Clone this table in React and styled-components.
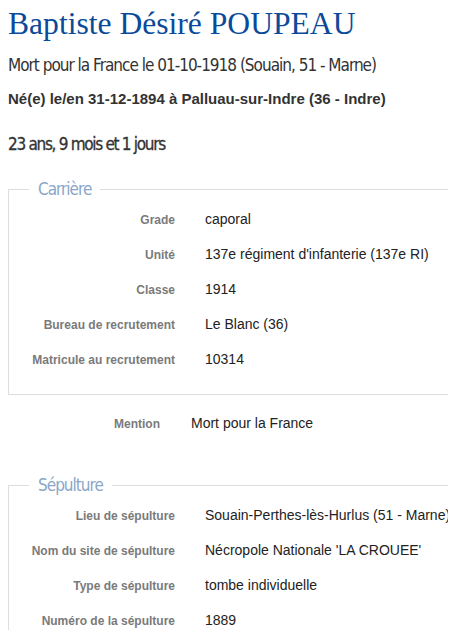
import React from "react";
import styled, { createGlobalStyle } from "styled-components";

const GlobalStyle = createGlobalStyle`
  body {
    margin: 8px;
    background: #fff;
    font-family: "Liberation Sans", Arial, sans-serif;
    color: #222;
    overflow: hidden;
  }
`;

const carriere = [
  ["Grade", "caporal"],
  ["Unité", "137e régiment d'infanterie (137e RI)"],
  ["Classe", "1914"],
  ["Bureau de recrutement", "Le Blanc (36)"],
  ["Matricule au recrutement", "10314"],
];

const sepulture = [
  ["Lieu de sépulture", "Souain-Perthes-lès-Hurlus (51 - Marne)"],
  ["Nom du site de sépulture", "Nécropole Nationale 'LA CROUEE'"],
  ["Type de sépulture", "tombe individuelle"],
  ["Numéro de la sépulture", "1889"],
];

function App() {
  return (
    <Page>
      <GlobalStyle />
      <Title>Baptiste Désiré POUPEAU</Title>
      <Subtitle>Mort pour la France le 01-10-1918 (Souain, 51 - Marne)</Subtitle>
      <Birth>Né(e) le/en 31-12-1894 à Palluau-sur-Indre (36 - Indre)</Birth>
      <Age>23 ans, 9 mois et 1 jours</Age>

      <Section>
        <Legend>Carrière</Legend>
        {carriere.map(([label, value]) => (
          <Row key={label}>
            <Label>{label}</Label>
            <Value>{value}</Value>
          </Row>
        ))}
      </Section>

      <Row $labelWidth={152} $gap={31} $outside>
        <Label>Mention</Label>
        <Value>Mort pour la France</Value>
      </Row>

      <Section $top={33}>
        <Legend>Sépulture</Legend>
        {sepulture.map(([label, value]) => (
          <Row key={label}>
            <Label>{label}</Label>
            <Value>{value}</Value>
          </Row>
        ))}
      </Section>
    </Page>
  );
}

export default App;

const Page = styled.div`
  width: 470px;
`;

const Title = styled.h1`
  margin: -2px 0 0;
  font-family: "Liberation Serif", "DejaVu Serif", serif;
  font-weight: 400;
  font-size: 31.6px;
  line-height: 36px;
  color: #0a4a9a;
  white-space: nowrap;
`;

const Subtitle = styled.h2`
  margin: 11px 0 0;
  font-family: "DejaVu Sans", sans-serif;
  font-stretch: condensed;
  font-weight: 400;
  font-size: 17px;
  line-height: 24px;
  letter-spacing: -1px;
  color: #333;
  white-space: nowrap;
`;

const Birth = styled.h3`
  margin: 12px 0 0;
  font-size: 15px;
  line-height: 20px;
  font-weight: 700;
  color: #333;
  white-space: nowrap;
`;

const Age = styled.h3`
  margin: 23px 0 0;
  font-family: "DejaVu Sans", sans-serif;
  font-stretch: condensed;
  font-size: 17px;
  line-height: 24px;
  letter-spacing: -1.3px;
  font-weight: 400;
  -webkit-text-stroke: 0.3px #333;
  color: #333;
  white-space: nowrap;
`;

const Section = styled.fieldset`
  margin: ${(p) => p.$top || 21}px 0 0;
  padding: 0 0 18px;
  border: 1px solid #ddd;
  min-width: 0;
`;

const Legend = styled.legend`
  margin-left: 20px;
  padding: 0 9px;
  font-family: "DejaVu Sans", sans-serif;
  font-stretch: condensed;
  font-size: 17px;
  line-height: 24px;
  letter-spacing: -1px;
  color: #8aa6c8;
`;

const Row = styled.div`
  display: grid;
  grid-template-columns: ${(p) => p.$labelWidth || 166}px 1fr;
  column-gap: ${(p) => p.$gap || 30}px;
  align-items: center;
  height: 35px;
  margin-top: ${(p) => (p.$outside ? 10 : 0)}px;
`;

const Label = styled.div`
  text-align: right;
  font-size: 12px;
  font-weight: 700;
  color: #7a7a7a;
  padding-top: 3px;
  white-space: nowrap;
`;

const Value = styled.div`
  font-size: 14px;
  color: #222;
  white-space: nowrap;
`;
